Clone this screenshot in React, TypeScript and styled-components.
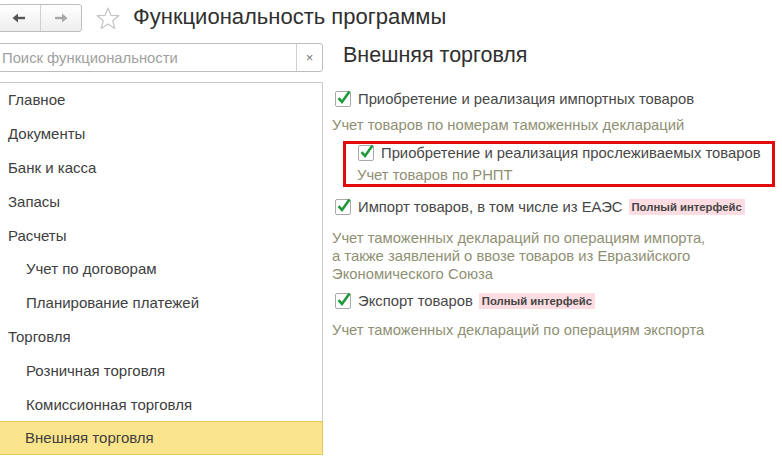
import React from "react";
import styled, { createGlobalStyle } from "styled-components";

const Global = createGlobalStyle`
  html, body { margin: 0; padding: 0; background: #fff; }
  body { font-family: "Liberation Sans", Arial, sans-serif; overflow: hidden; }
  * { box-sizing: border-box; }
`;

const Page = styled.div`
  width: 782px;
  height: 474px;
  background: #fff;
  display: flex;
  flex-direction: column;
  overflow: hidden;
`;

const TopBar = styled.div`
  height: 40px;
  display: flex;
  align-items: center;
`;

const NavGroup = styled.div`
  display: flex;
  margin-left: -2px;
  height: 28px;
  width: 84px;
  border: 1px solid #bdbdbd;
  border-radius: 3px;
  background: linear-gradient(#ffffff, #eeeeee);
  margin-top: -4px;
`;

const NavButton = styled.div<{ $dim?: boolean }>`
  flex: 1;
  display: flex;
  align-items: center;
  justify-content: center;
  color: ${(p) => (p.$dim ? "#a8a8a8" : "#555")};
  & + & { border-left: 1px solid #d0d0d0; }
`;

const StarBox = styled.div`
  margin-left: 14px;
  margin-top: -4px;
  display: flex;
`;

const Title = styled.div`
  margin-left: 13px;
  margin-top: -6px;
  font-size: 22px;
  color: #2f2f2f;
`;

const Body = styled.div`
  display: flex;
  flex: 1;
`;

const LeftCol = styled.div`
  width: 325px;
  margin-left: -2px;
  display: flex;
  flex-direction: column;
`;

const Search = styled.div`
  height: 29px;
  margin-top: 3px;
  border: 1px solid #bdbdbd;
  border-radius: 3px;
  display: flex;
  align-items: center;
`;

const SearchText = styled.div`
  flex: 1;
  padding-left: 3px;
  font-size: 14.8px;
  color: #a0a0a0;
`;

const ClearBtn = styled.div`
  width: 26px;
  height: 100%;
  border-left: 1px solid #cfcfcf;
  display: flex;
  align-items: center;
  justify-content: center;
  color: #777;
  font-size: 13px;
`;

const List = styled.div`
  margin-top: 10px;
  border: 1px solid #cacaca;
  border-bottom: none;
  height: 373px;
  display: flex;
  flex-direction: column;
`;

const Item = styled.div<{ $sub?: boolean; $active?: boolean }>`
  height: 33.8px;
  flex-shrink: 0;
  display: flex;
  align-items: center;
  padding-left: ${(p) => (p.$sub ? 26 : 8)}px;
  font-size: 15px;
  color: #404040;
  background: ${(p) => (p.$active ? "#fbe58c" : "transparent")};
  border: ${(p) => (p.$active ? "1px solid #e6c75a" : "1px solid transparent")};
  margin: ${(p) => (p.$active ? "0 -1px" : "0")};
`;

const RightCol = styled.div`
  flex: 1;
  padding-left: 9px;
  display: flex;
  flex-direction: column;
`;

const Heading = styled.div`
  font-size: 21.5px;
  color: #2f2f2f;
  padding-left: 11px;
  margin-top: 3px;
  height: 45px;
`;

const Option = styled.div<{ $gap?: number }>`
  display: flex;
  flex-direction: column;
  margin-top: ${(p) => p.$gap ?? 0}px;
`;

const CheckRow = styled.div<{ $indent?: number }>`
  display: flex;
  align-items: center;
  height: 22px;
  padding-left: ${(p) => p.$indent ?? 3}px;
`;

const Box = styled.div`
  width: 16px;
  height: 16px;
  border: 1px solid #a9a9a9;
  border-radius: 2px;
  background: #fff;
  position: relative;
  margin-right: 7px;
  flex-shrink: 0;
`;

const Label = styled.span`
  font-size: 14.8px;
  color: #474747;
`;

const Badge = styled.span`
  margin-left: 6px;
  background: #fddde1;
  color: #444;
  font-size: 11.3px;
  font-weight: bold;
  padding: 2px 3px;
`;

const Desc = styled.div<{ $indent?: number; $gap?: number }>`
  font-size: 14.8px;
  color: #8f8f73;
  line-height: 18px;
  padding-left: ${(p) => p.$indent ?? 0}px;
  margin-top: ${(p) => p.$gap ?? 0}px;
`;

const Highlight = styled.div`
  border: 3px solid #e10d0d;
  margin-left: 11px;
  width: 432px;
  height: 46px;
  margin-top: 7px;
  display: flex;
  flex-direction: column;
`;

const Check = () => (
  <Box>
    <svg width="16" height="16" viewBox="0 0 16 16" style={{ position: "absolute", left: 0, top: -3 }}>
      <path d="M2.5 9.2 L6 13 L13.5 2.5" fill="none" stroke="#1f9a3a" strokeWidth="2.6" strokeLinejoin="miter" />
    </svg>
  </Box>
);

const menu: { t: string; sub?: boolean; active?: boolean }[] = [
  { t: "Главное" },
  { t: "Документы" },
  { t: "Банк и касса" },
  { t: "Запасы" },
  { t: "Расчеты" },
  { t: "Учет по договорам", sub: true },
  { t: "Планирование платежей", sub: true },
  { t: "Торговля" },
  { t: "Розничная торговля", sub: true },
  { t: "Комиссионная торговля", sub: true },
  { t: "Внешняя торговля", sub: true, active: true },
];

export default function App() {
  return (
    <Page>
      <Global />
      <TopBar>
        <NavGroup>
          <NavButton>
            <svg width="14" height="10" viewBox="0 0 14 10">
              <path d="M13 5 H4" stroke="currentColor" strokeWidth="2.4" />
              <path d="M6 0.5 L0.5 5 L6 9.5 Z" fill="currentColor" />
            </svg>
          </NavButton>
          <NavButton $dim>
            <svg width="14" height="10" viewBox="0 0 14 10">
              <path d="M1 5 H10" stroke="currentColor" strokeWidth="2.4" />
              <path d="M8 0.5 L13.5 5 L8 9.5 Z" fill="currentColor" />
            </svg>
          </NavButton>
        </NavGroup>
        <StarBox>
          <svg width="24" height="23" viewBox="0 0 24 23">
            <path
              d="M12 1 L14.9 8.3 L22.8 8.7 L16.7 13.7 L18.8 21.4 L12 17 L5.2 21.4 L7.3 13.7 L1.2 8.7 L9.1 8.3 Z"
              fill="none"
              stroke="#c4c4c4"
              strokeWidth="1.2"
              strokeLinejoin="round"
            />
          </svg>
        </StarBox>
        <Title>Функциональность программы</Title>
      </TopBar>
      <Body>
        <LeftCol>
          <Search>
            <SearchText>Поиск функциональности</SearchText>
            <ClearBtn>×</ClearBtn>
          </Search>
          <List>
            {menu.map((m) => (
              <Item key={m.t} $sub={m.sub} $active={m.active}>
                {m.t}
              </Item>
            ))}
          </List>
        </LeftCol>
        <RightCol>
          <Heading>Внешняя торговля</Heading>
          <Option>
            <CheckRow>
              <Check />
              <Label>Приобретение и реализация импортных товаров</Label>
            </CheckRow>
            <Desc $gap={6}>Учет товаров по номерам таможенных деклараций</Desc>
          </Option>
          <Highlight>
            <CheckRow $indent={12}>
              <Check />
              <Label>Приобретение и реализация прослеживаемых товаров</Label>
            </CheckRow>
            <Desc $indent={11} $gap={5}>Учет товаров по РНПТ</Desc>
          </Highlight>
          <Option $gap={9}>
            <CheckRow>
              <Check />
              <Label>Импорт товаров, в том числе из ЕАЭС</Label>
              <Badge>Полный интерфейс</Badge>
            </CheckRow>
            <Desc $gap={11}>
              Учет таможенных деклараций по операциям импорта,
              <br />а также заявлений о ввозе товаров из Евразийского
              <br />Экономического Союза
            </Desc>
          </Option>
          <Option $gap={7}>
            <CheckRow>
              <Check />
              <Label>Экспорт товаров</Label>
              <Badge>Полный интерфейс</Badge>
            </CheckRow>
            <Desc $gap={9}>Учет таможенных деклараций по операциям экспорта</Desc>
          </Option>
        </RightCol>
      </Body>
    </Page>
  );
}
